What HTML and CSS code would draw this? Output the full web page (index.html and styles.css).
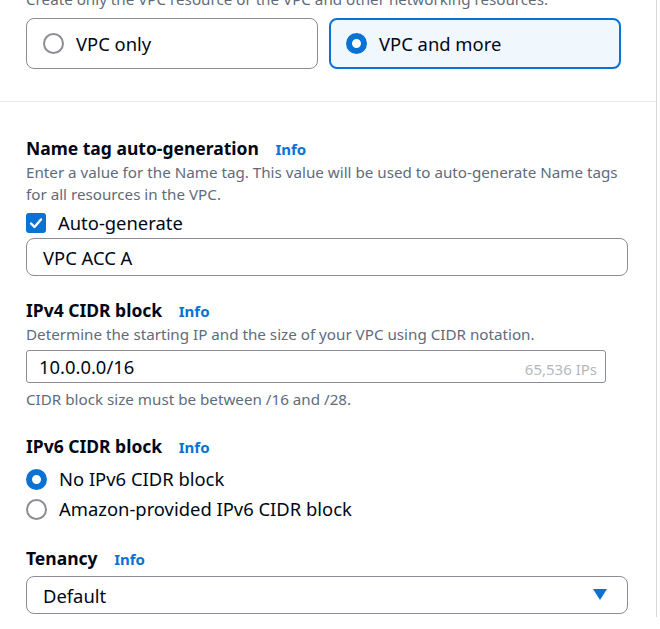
FILE: index.html
```html
<!DOCTYPE html>
<html>
<head>
<meta charset="utf-8">
<link rel="stylesheet" href="styles.css">
</head>
<body>
<div class="panel">
  <section class="sec sec-top">
    <p class="desc desc-top">Create only the VPC resource or the VPC and other networking resources.</p>
    <div class="tiles">
      <div class="tile">
        <span class="radio"></span>
        <span class="tile-label">VPC only</span>
      </div>
      <div class="tile tile-on">
        <span class="radio radio-on"></span>
        <span class="tile-label">VPC and more</span>
      </div>
    </div>
  </section>
  <section class="sec sec-main">
    <div class="field">
      <div class="label">Name tag auto-generation <span class="info">Info</span></div>
      <p class="desc">Enter a value for the Name tag. This value will be used to auto-generate Name tags for all resources in the VPC.</p>
      <div class="check-row">
        <span class="checkbox"><svg viewBox="0 0 20 20" width="20" height="20"><path d="M5 10.5 L8.5 14 L15 6.5" fill="none" stroke="#fff" stroke-width="2.4" stroke-linecap="round" stroke-linejoin="round"/></svg></span>
        <span class="opt-label">Auto-generate</span>
      </div>
      <div class="input input-round">VPC ACC A</div>
    </div>
    <div class="field field-ipv4">
      <div class="label">IPv4 CIDR block <span class="info">Info</span></div>
      <p class="desc">Determine the starting IP and the size of your VPC using CIDR notation.</p>
      <div class="input input-sq"><span>10.0.0.0/16</span><span class="ips">65,536 IPs</span></div>
      <p class="desc note">CIDR block size must be between /16 and /28.</p>
    </div>
    <div class="field field-ipv6">
      <div class="label">IPv6 CIDR block <span class="info">Info</span></div>
      <div class="radio-row"><span class="radio radio-on"></span><span class="opt-label">No IPv6 CIDR block</span></div>
      <div class="radio-row"><span class="radio"></span><span class="opt-label">Amazon-provided IPv6 CIDR block</span></div>
    </div>
    <div class="field field-ten">
      <div class="label">Tenancy <span class="info">Info</span></div>
      <div class="input input-round select"><span>Default</span><svg class="caret" viewBox="0 0 14 12" width="14" height="12"><path d="M0 0 H14 L7 11 Z" fill="#0972d3"/></svg></div>
    </div>
  </section>
</div>
</body>
</html>
```
FILE: styles.css
```css
* { box-sizing: border-box; }
html, body { margin: 0; padding: 0; background: #fff; overflow: hidden; }
body {
  font-family: "Noto Sans", "Open Sans", sans-serif;
  color: #000716;
  width: 660px;
  height: 629px;
}
.panel {
  width: 657px;
  height: 629px;
  border-right: 1px solid #d5d9de;
}
.sec-top {
  margin-top: -12px;
  padding: 0 36px 32px 26px;
  border-bottom: 1px solid #e9ebed;
}
.desc {
  margin: 0;
  font-size: 15.2px;
  line-height: 22px;
  color: #5f6b7a;
}
.desc-top { margin-bottom: 8px; white-space: nowrap; }
.tiles {
  display: grid;
  grid-template-columns: 292px 292px;
  gap: 11px;
}
.tile {
  height: 51px;
  border: 1px solid #8c8c94;
  border-radius: 8px;
  display: flex;
  align-items: center;
  padding-left: 16px;
  gap: 12px;
}
.tile-on {
  border: 2px solid #0972d3;
  background: #f0f8fe;
  padding-left: 15px;
}
.tile-label { font-size: 18.4px; line-height: 22px; }
.radio {
  width: 21px;
  height: 21px;
  border-radius: 50%;
  border: 2px solid #8c8c94;
  flex: none;
  background: #fff;
}
.radio-on { border: 6px solid #0972d3; }
.sec-main { padding: 34px 28px 0 26px; }
.label {
  font-size: 17.5px;
  font-weight: 700;
  line-height: 24px;
}
.info {
  color: #0972d3;
  font-size: 15px;
  font-weight: 700;
  margin-left: 12px;
}
.check-row, .radio-row {
  display: flex;
  align-items: center;
  gap: 12px;
  height: 30px;
}
.check-row { margin-top: 3px; }
.checkbox {
  width: 20px;
  height: 20px;
  border-radius: 3px;
  background: #0972d3;
  display: block;
}
.checkbox svg { display: block; }
.opt-label { font-size: 18.4px; line-height: 22px; }
.input {
  border: 1px solid #8c8c94;
  font-size: 18.4px;
  display: flex;
  align-items: center;
}
.input-round {
  height: 38px;
  border-radius: 8px;
  padding: 0 16px;
}
.input-sq {
  height: 33px;
  width: 580px;
  border-radius: 3px;
  padding: 0 8px 0 12px;
  justify-content: space-between;
  margin-top: 5px;
}
.ips { font-size: 15px; color: #b4b8bd; padding-top: 4px; }
.note { margin-top: 5px; }
.field-ipv4 { margin-top: 22px; }
.field-ipv6 { margin-top: 24px; }
.field-ipv6 .label { margin-bottom: 5px; }
.field-ten { margin-top: 22px; }
.field-ten .label { margin-bottom: 5px; }
.select { justify-content: space-between; padding-right: 20px; }
.caret { display: block; }
```
